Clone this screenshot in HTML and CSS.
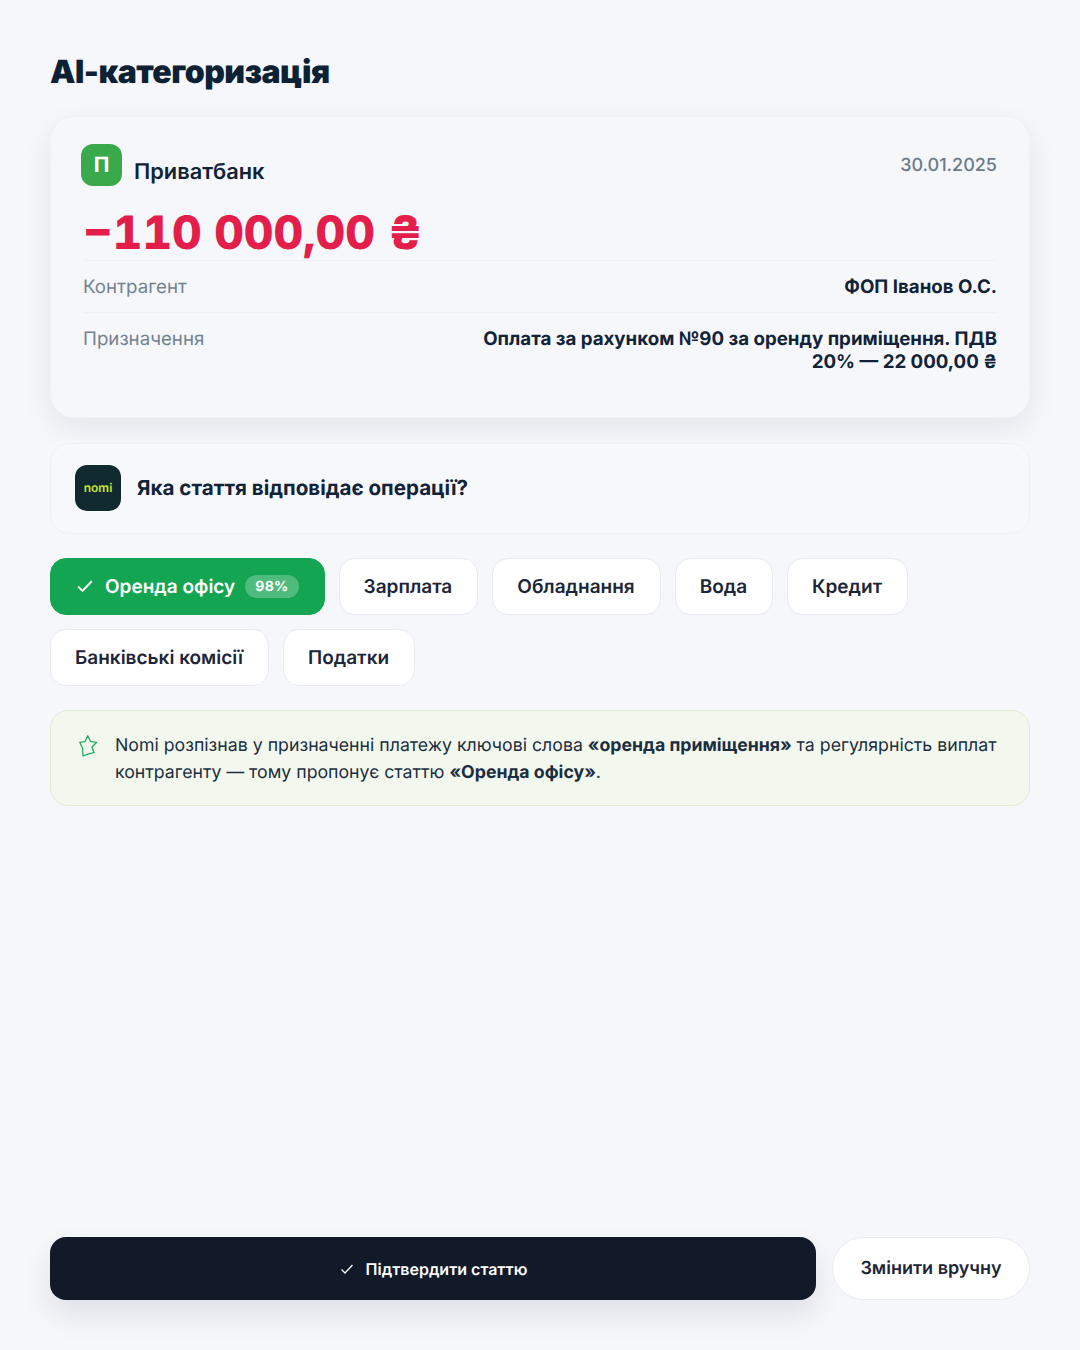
FILE: index.html
```html
<!DOCTYPE html>
<html lang="uk">
<head>
    <meta charset="UTF-8">
    <meta name="viewport" content="width=device-width, initial-scale=1.0">
    <title>AI-категоризація</title>
    <link rel="stylesheet" href="styles.css">
</head>
<body>
    <main class="page">
        <h1 class="title">AI-категоризація</h1>

        <!-- Payment card -->
        <section class="card">
            <div class="card-top">
                <div class="bank">
                    <svg class="bank-logo" viewBox="0 0 41 42" width="41" height="42">
                        <rect width="41" height="42" rx="12" fill="#3aa94b"/>
                    </svg>
                    <span class="bank-letter">П</span>
                    <span class="bank-name">Приватбанк</span>
                </div>
                <span class="date">30.01.2025</span>
            </div>
            <div class="amount">−110 000,00 ₴</div>
            <div class="row">
                <span class="row-label">Контрагент</span>
                <span class="row-value">ФОП Іванов О.С.</span>
            </div>
            <div class="row">
                <span class="row-label">Призначення</span>
                <span class="row-value row-value-wide">Оплата за рахунком №90 за оренду приміщення. ПДВ 20% — 22 000,00 ₴</span>
            </div>
        </section>

        <!-- Question -->
        <section class="question">
            <div class="nomi-logo">nomi</div>
            <span class="question-text">Яка стаття відповідає операції?</span>
        </section>

        <!-- Categories -->
        <div class="chips">
            <button class="chip chip-active">
                <svg class="check" viewBox="0 0 16 16" width="18" height="18"><path d="M2 8.500l3.800 3.800L14 3.800" fill="none" stroke="#fff" stroke-width="1.700"/></svg>
                Оренда офісу
                <span class="chip-badge">98%</span>
            </button>
            <button class="chip">Зарплата</button>
            <button class="chip">Обладнання</button>
            <button class="chip">Вода</button>
            <button class="chip">Кредит</button>
            <button class="chip">Банківські комісії</button>
            <button class="chip">Податки</button>
        </div>

        <!-- Explanation -->
        <section class="hint">
            <svg class="hint-icon" viewBox="0 0 20 24" width="20" height="24">
                <path d="M9.700 2.700L12.700 8.700 18.700 9.300 14 14 16 19.700 10.500 20.800 5 23 4.600 15.300 1.700 9.300 7 8.700z" fill="none" stroke="#22ab5f" stroke-width="1.300" stroke-linejoin="round"/>
            </svg>
            <p class="hint-text">Nomi розпізнав у призначенні платежу ключові слова <b>«оренда приміщення»</b> та регулярність виплат контрагенту — тому пропонує статтю <b>«Оренда офісу»</b>.</p>
        </section>

        <!-- Actions -->
        <footer class="actions">
            <button class="btn-confirm">
                <svg class="check" viewBox="0 0 16 16" width="16" height="16"><path d="M2.500 8.500l3.500 3.500 7.500-8" fill="none" stroke="#fff" stroke-width="1.300"/></svg>
                Підтвердити статтю
            </button>
            <button class="btn-manual">Змінити вручну</button>
        </footer>
    </main>
</body>
</html>
```

FILE: styles.css
```css
* {
    margin: 0;
    padding: 0;
    box-sizing: border-box;
}

body {
    font-family: Inter, "Noto Sans", sans-serif;
    background-color: #f5f7fb;
    color: #0f2033;
    text-rendering: geometricPrecision;
}

button {
    font-family: inherit;
    text-rendering: inherit;
}

.page {
    height: 1350px;
    padding: 50px;
    display: flex;
    flex-direction: column;
}

.title {
    font-size: 32px;
    line-height: 44px;
    font-weight: 900;
    letter-spacing: -0.5px;
    color: #0c2133;
    margin-bottom: 22px;
}

.card {
    height: 302px;
    border: 1px solid #f0f2f6;
    border-radius: 24px;
    padding: 27px 32px 0;
    background-color: #f5f7fb;
    box-shadow: 0 10px 30px rgba(16, 24, 40, 0.08);
}

.card-top {
    display: flex;
    justify-content: space-between;
    align-items: flex-start;
}

.bank {
    position: relative;
    display: flex;
    align-items: flex-end;
    gap: 12px;
    margin-left: -2px;
}

.bank-letter {
    position: absolute;
    left: 0;
    top: 9px;
    width: 41px;
    text-align: center;
    color: #fff;
    font-size: 21px;
    line-height: 26px;
    font-weight: 700;
}

.bank-name {
    font-size: 21.800px;
    line-height: 28px;
    font-weight: 600;
    color: #122338;
}

.date {
    font-size: 18px;
    line-height: 26px;
    font-weight: 500;
    color: #6c7a88;
    margin-top: 9px;
}

.amount {
    font-size: 46px;
    line-height: 54px;
    font-weight: 800;
    color: #e31e4b;
    margin-top: 20px;
    font-variant-numeric: tabular-nums;
}

.row {
    display: flex;
    justify-content: space-between;
    gap: 24px;
    border-top: 1px solid #edf0f4;
    padding: 14px 0;
    font-size: 18.700px;
    line-height: 23px;
}

.row-label {
    color: #748290;
}

.row-value {
    text-align: right;
    font-weight: 700;
    color: #122338;
}

.row-value-wide {
    width: 530px;
}

.question {
    height: 91px;
    margin-top: 25px;
    border: 1px solid #eef0f5;
    border-radius: 20px;
    padding: 0 24px 2px;
    display: flex;
    align-items: center;
    gap: 16px;
    background-color: #f6f8fc;
}

.nomi-logo {
    width: 46px;
    height: 46px;
    border-radius: 12px;
    background-color: #112a30;
    color: #c8e62f;
    font-size: 12px;
    font-weight: 600;
    display: flex;
    align-items: center;
    justify-content: center;
}

.question-text {
    font-size: 20.600px;
    font-weight: 700;
    color: #122338;
}

.chips {
    margin-top: 24px;
    display: flex;
    flex-wrap: wrap;
    gap: 14px;
}

.chip {
    height: 57px;
    padding: 0 25px 1px 24px;
    border: 1px solid #e8ebf0;
    border-radius: 16px;
    background-color: #fff;
    color: #1c2638;
    font-size: 19px;
    font-weight: 600;
    display: flex;
    align-items: center;
}

.chip-active {
    background-color: #14a552;
    border-color: #14a552;
    color: #fff;
    padding: 0 25px 1px 25px;
}

.chip-active .check {
    margin-right: 11px;
}

.chip-badge {
    margin-left: 10px;
    height: 23px;
    padding: 0 10px;
    border-radius: 12px;
    background-color: rgba(255, 255, 255, 0.25);
    font-size: 14px;
    letter-spacing: 0.3px;
    line-height: 23px;
    font-weight: 700;
}

.hint {
    height: 96px;
    margin-top: 24px;
    border: 1px solid #dfeed0;
    border-radius: 18px;
    background-color: #f2f8ee;
    padding: 21px 32px 0 24px;
    display: flex;
    gap: 17px;
}

.hint-icon {
    flex-shrink: 0;
    margin-top: 1px;
    margin-left: 3px;
}

.hint-text {
    font-size: 17.720px;
    line-height: 27px;
    color: #1c2d40;
}

.hint-text b {
    font-weight: 700;
}

.actions {
    margin-top: auto;
    display: flex;
    gap: 16px;
}

.btn-confirm {
    flex: 1;
    height: 63px;
    border: none;
    border-radius: 16px;
    background-color: #121a29;
    color: #fff;
    font-size: 16px;
    font-weight: 600;
    display: flex;
    align-items: center;
    justify-content: center;
    gap: 11px;
    box-shadow: 0 14px 30px rgba(16, 24, 40, 0.1);
}

.btn-manual {
    width: 198px;
    height: 63px;
    border: 1px solid #e8ebf0;
    border-radius: 32px;
    background-color: #fff;
    color: #1c2638;
    font-size: 18px;
    font-weight: 600;
}
```
